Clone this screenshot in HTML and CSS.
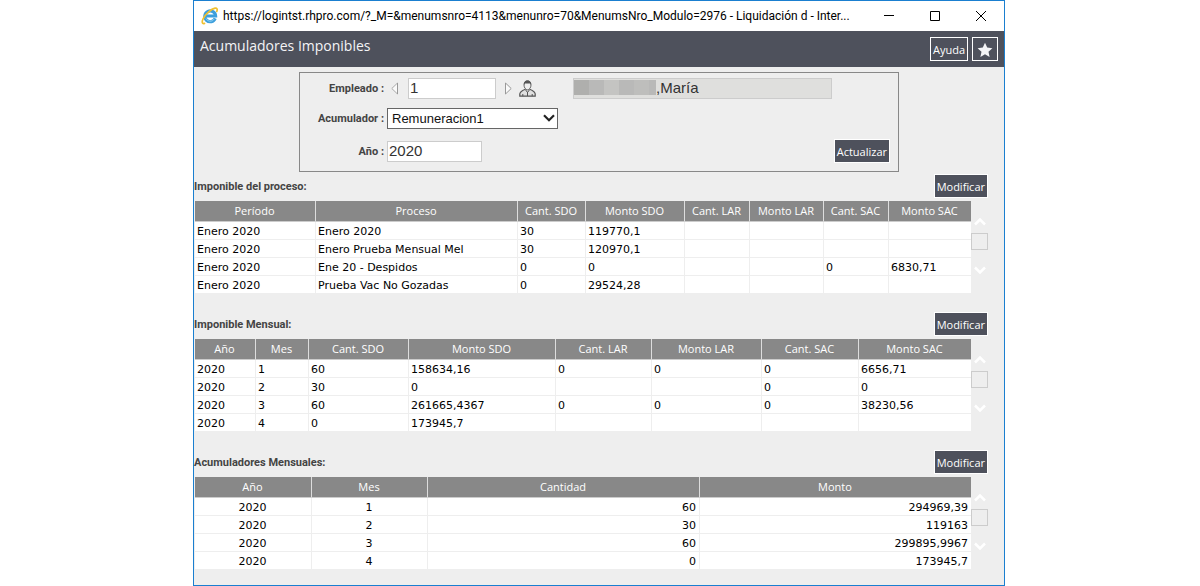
FILE: index.html
```
<!DOCTYPE html>
<html lang="es">
<head>
<meta charset="utf-8">
<title>Acumuladores Imponibles</title>
<link rel="stylesheet" href="styles.css">
</head>
<body>
<div class="window">
  <div class="titlebar">
    <svg class="browser-icon" viewBox="0 0 18 18" aria-hidden="true">
      <path d="M14.2 11.4A5.4 5.4 0 1 1 14.6 9H5" fill="none" stroke="#3d9fdc" stroke-width="3.2"/>
      <path d="M13.2 12A4.6 4.6 0 0 1 5 11.500" fill="none" stroke="#8fd0f4" stroke-width="1"/>
      <path d="M3.500 16.400C1.200 17.200 .5 15 2.200 11.600 4.300 7.200 10.200 1.900 14 1.200c2-.4 2.700 1 1.800 3.200" fill="none" stroke="#f0c030" stroke-width="1.700" stroke-linecap="round"/>
    </svg>
    <span class="titlebar-text">https://logintst.rhpro.com/?_M=&amp;menumsnro=4113&amp;menunro=70&amp;MenumsNro_Modulo=2976 - Liquidación d - Inter...</span>
    <div class="window-controls">
      <button type="button" aria-label="Minimizar"><svg viewBox="0 0 12 12"><path d="M1 5.500h10"/></svg></button>
      <button type="button" aria-label="Maximizar"><svg viewBox="0 0 12 12"><path d="M1.500 1.500h9v9h-9z"/></svg></button>
      <button type="button" aria-label="Cerrar"><svg viewBox="0 0 12 12"><path d="M1 1l10 10M11 1L1 11"/></svg></button>
    </div>
  </div>

  <header class="header">
    <h1 class="header-title">Acumuladores Imponibles</h1>
    <div class="header-actions">
      <button type="button" class="btn">Ayuda</button>
      <button type="button" class="btn btn-star" aria-label="Favorito"><svg viewBox="0 0 16 16"><path d="M8 .8l2.200 4.800 5.200.6-3.900 3.500 1.100 5.200L8 12.300l-4.600 2.600 1.100-5.200L.6 6.200l5.200-.6z" fill="#f4f4f6"/></svg></button>
    </div>
  </header>

  <main>
    <form class="filter">
      <div class="filter-fields">
        <div class="row">
          <label class="label" for="empleado">Empleado :</label>
          <button type="button" class="icon-btn prev" aria-label="Anterior"><svg viewBox="0 0 7 13"><path d="M6.500 1v11L.8 6.500z" fill="#fafafa" stroke="#aaa"/><path d="M6.500 1v11" stroke="#999"/></svg></button>
          <input class="field code" id="empleado" type="text" value="1">
          <button type="button" class="icon-btn next" aria-label="Siguiente"><svg viewBox="0 0 7 13"><path d="M.5 1v11l5.700-5.500z" fill="#fafafa" stroke="#999"/></svg></button>
          <button type="button" class="icon-btn person" aria-label="Buscar empleado"><svg viewBox="0 0 17 17"><path d="M6.300 9.200C3.500 10.400.8 11.600.8 14v2.200h15.400V14c0-2.400-2.700-3.600-5.500-4.800" fill="#e0e0e0" stroke="#555" stroke-width="1.200"/><path d="M5 5c0-2.600 1.300-4.200 3.500-4.200S12 2.400 12 5 10.300 9.800 8.500 9.800 5 7.600 5 5z" fill="#eee" stroke="#666"/><path d="M4.900 5C4.700 2.200 6 .5 8.500.5S12.300 2.200 12.100 5L11 3.400H6z" fill="#555"/><path d="M6.300 9.500l2.200 3 2.200-3M8.500 12v4M3.800 14v2.200M13.200 14v2.200" fill="none" stroke="#555"/></svg></button>
          <div class="field employee-name"><span class="redacted"><i></i><i></i><i></i><i></i><i></i><i></i></span><span>,María</span></div>
        </div>
        <div class="row">
          <label class="label" for="acumulador">Acumulador :</label>
          <div class="select-wrap">
            <select class="field select" id="acumulador"><option>Remuneracion1</option></select>
            <svg class="select-arrow" viewBox="0 0 12 8" aria-hidden="true"><path d="M1 1.200l5 5 5-5" fill="none" stroke="#222" stroke-width="2.200"/></svg>
          </div>
        </div>
        <div class="row row-last">
          <label class="label" for="anio">Año :</label>
          <input class="field year" id="anio" type="text" value="2020">
          <button type="button" class="btn update">Actualizar</button>
        </div>
      </div>
    </form>

    <section class="section">
      <div class="section-head"><h2>Imponible del proceso:</h2><button type="button" class="btn">Modificar</button></div>
      <div class="section-body">
        <table class="data process">
          <colgroup><col class="c1"><col class="c2"><col class="c3"><col class="c4"><col class="c5"><col class="c6"><col class="c7"><col class="c8"></colgroup>
          <thead><tr><th>Período</th><th>Proceso</th><th>Cant. SDO</th><th>Monto SDO</th><th>Cant. LAR</th><th>Monto LAR</th><th>Cant. SAC</th><th>Monto SAC</th></tr></thead>
          <tbody>
            <tr><td>Enero 2020</td><td>Enero 2020</td><td>30</td><td>119770,1</td><td></td><td></td><td></td><td></td></tr>
            <tr><td>Enero 2020</td><td>Enero Prueba Mensual Mel</td><td>30</td><td>120970,1</td><td></td><td></td><td></td><td></td></tr>
            <tr><td>Enero 2020</td><td>Ene 20 - Despidos</td><td>0</td><td>0</td><td></td><td></td><td>0</td><td>6830,71</td></tr>
            <tr><td>Enero 2020</td><td>Prueba Vac No Gozadas</td><td>0</td><td>29524,28</td><td></td><td></td><td></td><td></td></tr>
          </tbody>
        </table>
        <div class="scroller" aria-hidden="true"><svg viewBox="0 0 12 9"><path d="M1 7.500l5-5 5 5"/></svg><span class="thumb"></span><svg viewBox="0 0 12 9"><path d="M1 1.500l5 5 5-5"/></svg></div>
      </div>
    </section>

    <section class="section">
      <div class="section-head"><h2>Imponible Mensual:</h2><button type="button" class="btn">Modificar</button></div>
      <div class="section-body">
        <table class="data monthly">
          <colgroup><col class="c1"><col class="c2"><col class="c3"><col class="c4"><col class="c5"><col class="c6"><col class="c7"><col class="c8"></colgroup>
          <thead><tr><th>Año</th><th>Mes</th><th>Cant. SDO</th><th>Monto SDO</th><th>Cant. LAR</th><th>Monto LAR</th><th>Cant. SAC</th><th>Monto SAC</th></tr></thead>
          <tbody>
            <tr><td>2020</td><td>1</td><td>60</td><td>158634,16</td><td>0</td><td>0</td><td>0</td><td>6656,71</td></tr>
            <tr><td>2020</td><td>2</td><td>30</td><td>0</td><td></td><td></td><td>0</td><td>0</td></tr>
            <tr><td>2020</td><td>3</td><td>60</td><td>261665,4367</td><td>0</td><td>0</td><td>0</td><td>38230,56</td></tr>
            <tr><td>2020</td><td>4</td><td>0</td><td>173945,7</td><td></td><td></td><td></td><td></td></tr>
          </tbody>
        </table>
        <div class="scroller" aria-hidden="true"><svg viewBox="0 0 12 9"><path d="M1 7.500l5-5 5 5"/></svg><span class="thumb"></span><svg viewBox="0 0 12 9"><path d="M1 1.500l5 5 5-5"/></svg></div>
      </div>
    </section>

    <section class="section">
      <div class="section-head"><h2>Acumuladores Mensuales:</h2><button type="button" class="btn">Modificar</button></div>
      <div class="section-body">
        <table class="data totals">
          <colgroup><col class="c1"><col class="c2"><col class="c3"><col class="c4"></colgroup>
          <thead><tr><th>Año</th><th>Mes</th><th>Cantidad</th><th>Monto</th></tr></thead>
          <tbody>
            <tr><td>2020</td><td>1</td><td class="num">60</td><td class="num">294969,39</td></tr>
            <tr><td>2020</td><td>2</td><td class="num">30</td><td class="num">119163</td></tr>
            <tr><td>2020</td><td>3</td><td class="num">60</td><td class="num">299895,9967</td></tr>
            <tr><td>2020</td><td>4</td><td class="num">0</td><td class="num">173945,7</td></tr>
          </tbody>
        </table>
        <div class="scroller" aria-hidden="true"><svg viewBox="0 0 12 9"><path d="M1 7.500l5-5 5 5"/></svg><span class="thumb"></span><svg viewBox="0 0 12 9"><path d="M1 1.500l5 5 5-5"/></svg></div>
      </div>
    </section>
  </main>
</div>
</body>
</html>
```
FILE: styles.css
```
* { box-sizing: border-box; }

body {
  margin: 0;
  padding: 0 195px 0 193px;
  background: #fff;
  color: #444;
  font-family: "Open Sans", "Noto Sans", sans-serif;
  font-size: 11px;
}

button, input, select { font-family: inherit; margin: 0; }

.window {
  min-height: 100vh;
  background: #eee;
  border: 1px solid #1a7fd0;
}

/* Title bar */
.titlebar {
  display: flex;
  align-items: center;
  height: 30px;
  padding: 0 17px 0 7px;
  background: #fff;
  color: #000;
}
.browser-icon { flex: none; width: 18px; height: 18px; margin-right: 4px; }
.titlebar-text { flex: 1; font-family: Roboto, "Open Sans", sans-serif; font-size: 12px; white-space: nowrap; }
.window-controls { display: flex; gap: 34px; margin-left: 8px; }
.window-controls button {
  display: flex;
  width: 12px;
  height: 12px;
  padding: 0;
  border: 0;
  background: none;
}
.window-controls svg { width: 12px; height: 12px; fill: none; stroke: #000; }

/* Header */
.header {
  display: flex;
  justify-content: space-between;
  height: 36px;
  padding: 6px;
  background: #4e515c;
  color: #f4f4f6;
}
.header-title { margin: 0; font-size: 14px; font-weight: 400; line-height: 17px; }
.header-actions { display: flex; gap: 4px; }

.btn {
  height: 24px;
  padding: 1px 2px 0;
  border: 1px solid #fff;
  background: #4e515c;
  color: #fff;
  font-size: 11px;
  line-height: 21px;
  white-space: nowrap;
}
.btn-star { display: flex; align-items: center; justify-content: center; width: 26px; }
.btn-star svg { width: 16px; height: 16px; }

/* Filter form */
.filter {
  margin: 5px 105px 0;
  padding: 5px 8px 8px 0;
  border: 1px solid #888;
}
.filter-fields { display: flex; flex-direction: column; gap: 9px; }
.row { display: flex; align-items: center; }
.row-last { padding-top: 1px; }
.label,
.section-head h2 {
  font-family: Roboto, "Open Sans", sans-serif;
  font-size: 11px;
  font-weight: 700;
  white-space: nowrap;
}
.label { width: 84px; margin-right: 3px; text-align: right; }
.field {
  height: 21px;
  padding: 0 0 2px 1px;
  border: 1px solid #ccc;
  border-radius: 0;
  background: #fff;
  color: #333;
  font-family: "Liberation Sans", Arial, sans-serif;
  font-size: 15px;
}
.code { width: 88px; }
.year { width: 95px; }
.icon-btn { display: flex; padding: 0; border: 0; background: none; }
.icon-btn svg { display: block; }
.prev svg, .next svg { width: 7px; height: 13px; }
.prev { margin: 0 10px 0 4px; }
.next { margin: 0 7px 0 9px; }
.person svg { width: 17px; height: 17px; }
.employee-name {
  display: flex;
  flex: 0 1 259px;
  margin-left: 37px;
  padding: 1px 0 0;
  background: #dfdfdd;
  line-height: 16px;
}
.redacted { display: flex; width: 82px; height: 15px; }
.redacted i { flex: 2; background: #b9b9b8; }
.redacted i:nth-child(1) { background: #afafad; }
.redacted i:nth-child(3) { background: #c4c4c2; }
.redacted i:nth-child(5) { background: #bebebc; }
.redacted i:nth-child(6) { flex: 1; }
.select-wrap { position: relative; width: 171px; }
.select {
  display: block;
  width: 100%;
  padding: 0 0 0 4px;
  border-color: #666;
  color: #111;
  font-size: 13px;
  appearance: none;
}
.select-arrow { position: absolute; right: 3px; top: 6px; width: 12px; height: 8px; pointer-events: none; }
.update { margin-left: auto; }

/* Sections */
.section { padding-right: 16px; margin-top: 18px; }
.filter + .section { margin-top: 2px; }
.section-head { display: flex; align-items: center; justify-content: space-between; margin-bottom: 3px; }
.section-head h2 { margin: 0; }
.section-body { display: flex; padding-left: 1px; }

.data { flex: 1; border-collapse: separate; border-spacing: 0; table-layout: fixed; }
.data th, .data td { padding: 0 3px 0 2px; white-space: nowrap; }
.data th {
  height: 21px;
  border-right: 1px solid #ddd;
  border-bottom: 1px solid #ccc;
  background: #888;
  color: #fff;
  font-weight: 400;
  line-height: 20px;
}
.data td {
  height: 18px;
  padding-top: 2px;
  border-right: 1px solid #eee;
  border-bottom: 1px solid #eee;
  background: #fff;
  color: #000;
  font-family: Verdana, "DejaVu Sans", sans-serif;
  line-height: 15px;
}
.data th:last-child, .data td:last-child { border-right: 0; }

.process .c1 { width: 121px; }
.process .c2 { width: 202px; }
.process .c3 { width: 68px; }
.process .c4 { width: 99px; }
.process .c5 { width: 65px; }
.process .c6 { width: 74px; }
.process .c7 { width: 65px; }
.process .c8 { width: 82px; }

.monthly .c1 { width: 61px; }
.monthly .c2 { width: 53px; }
.monthly .c3 { width: 100px; }
.monthly .c4 { width: 147px; }
.monthly .c5 { width: 96px; }
.monthly .c6 { width: 110px; }
.monthly .c7 { width: 97px; }
.monthly .c8 { width: 112px; }

.totals .c1 { width: 117px; }
.totals .c2 { width: 116px; }
.totals .c3 { width: 272px; }
.totals .c4 { width: 271px; }
.totals td { text-align: center; }
.totals td.num { text-align: right; }

.scroller { display: flex; flex-direction: column; align-items: center; gap: 7px; width: 17px; padding-top: 16px; }
.scroller svg { width: 12px; height: 9px; fill: none; stroke: #fff; stroke-width: 2.500; }
.thumb { width: 17px; height: 17px; border: 1px solid #ccc; }
.thumb + svg { margin-top: 9px; }
```
